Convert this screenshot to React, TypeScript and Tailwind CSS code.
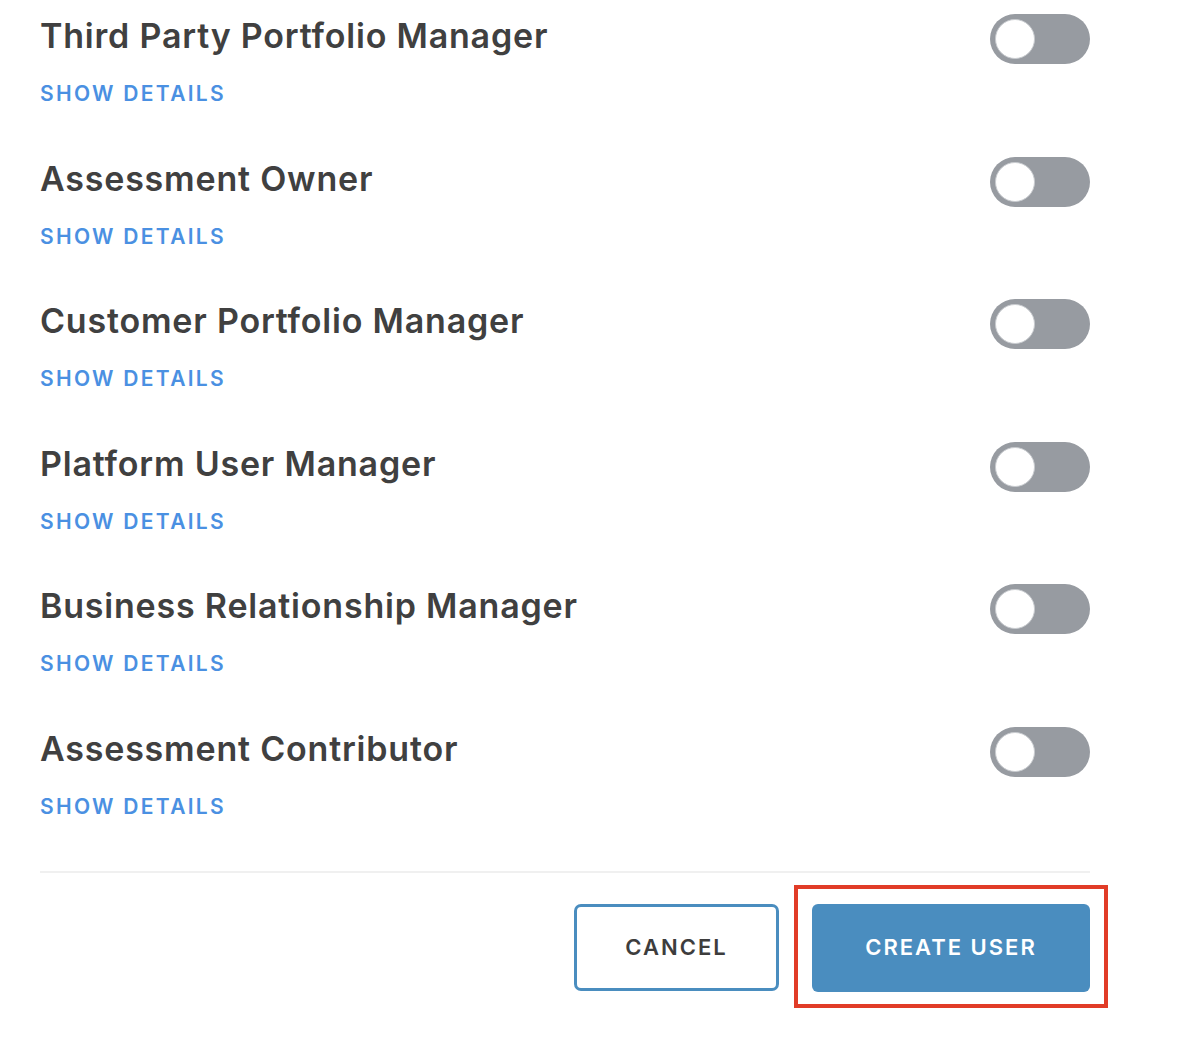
import React from "react";

const roles = [
  "Third Party Portfolio Manager",
  "Assessment Owner",
  "Customer Portfolio Manager",
  "Platform User Manager",
  "Business Relationship Manager",
  "Assessment Contributor",
];

function Toggle() {
  return (
    <div className="w-[100px] h-[50px] rounded-full bg-[#979ba1] flex items-center pl-[5px]">
      <div className="w-[40px] h-[40px] rounded-full bg-white border border-[#c8cbcf]" />
    </div>
  );
}

export default function App() {
  return (
    <div
      className="w-[1180px] h-[1050px] bg-white pl-[40px] pt-[16px]"
      style={{ fontFamily: "Inter, 'Noto Sans', sans-serif" }}
    >
      <div className="w-[1050px]">
        {roles.map((r) => (
          <div key={r} className="h-[142.6px] flex justify-between items-start">
            <div className="flex flex-col">
              <div className="h-[40px] leading-[40px] text-[34px] font-semibold text-[#404040] tracking-[0.8px]">
                {r}
              </div>
              <div className="mt-[26px] h-[24px] leading-[24px] text-[21px] font-semibold text-[#4a90e2] tracking-[2.3px]">
                SHOW DETAILS
              </div>
            </div>
            <div className="mt-[-2px]">
              <Toggle />
            </div>
          </div>
        ))}
        <div className="h-[2px] bg-[#f0f0f0] mt-[-1px]" />
        <div className="flex justify-end items-center mt-[31px]">
          <button className="w-[205px] h-[87px] rounded-[7px] border-[3px] border-[#4a8dbf] bg-white text-[#3d3d3d] text-[22px] font-semibold tracking-[2px]">
            CANCEL
          </button>
          <div className="relative ml-[33px]">
            <button className="w-[278px] h-[88px] rounded-[6px] bg-[#4a8dbf] text-white text-[22px] font-semibold tracking-[2px]">
              CREATE USER
            </button>
            <div className="absolute left-[-18px] right-[-18px] top-[-19px] bottom-[-16px] border-[4px] border-[#e13c27] pointer-events-none" />
          </div>
        </div>
      </div>
    </div>
  );
}
